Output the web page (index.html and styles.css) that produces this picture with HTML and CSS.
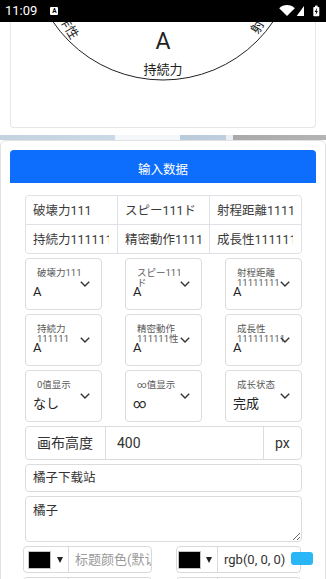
FILE: index.html
```html
<!DOCTYPE html>
<html lang="zh">
<head>
<meta charset="utf-8">
<title>替身面板</title>
<link rel="stylesheet" href="styles.css">
</head>
<body>
<div class="statusbar">
  <div class="sb-left">
    <span class="sb-time">11:09</span>
    <span class="sb-note">A</span>
  </div>
  <svg class="sb-icons" width="42" height="22" viewBox="0 0 42 22">
    <path d="M0.2 8.2 A11 11 0 0 1 15.8 8.2 L8 16 Z" fill="#fff"/>
    <polygon points="25,6 25,16 17.7,16" fill="#fff"/>
    <rect x="36" y="5.6" width="2.6" height="1.6" fill="#fff"/>
    <rect x="34.3" y="7" width="6" height="9.2" rx="0.8" fill="#fff"/>
    <path d="M37.9 8.2 L35.7 12 L37.1 12 L36.6 15 L38.9 11 L37.5 11 L38.2 8.2 Z" fill="#000"/>
  </svg>
</div>

<div class="chart-wrap">
  <div class="chart-card">
    <svg class="chart" width="304" height="105" viewBox="0 0 304 105">
      <circle cx="152" cy="-75" r="133" fill="none" stroke="#222" stroke-width="1"/>
      <text class="lbl" x="152" y="-197" text-anchor="middle" dominant-baseline="central">破壊力</text>
      <text class="lbl" x="257.7" y="-136" text-anchor="middle" dominant-baseline="central" transform="rotate(-120 257.7 -136)">スピード</text>
      <text class="lbl" x="256" y="-12" text-anchor="middle" dominant-baseline="central" transform="rotate(-60 256 -12)">射程距離</text>
      <text class="lbl" x="152" y="47" text-anchor="middle" dominant-baseline="central">持続力</text>
      <text class="lbl" x="48" y="-12" text-anchor="middle" dominant-baseline="central" transform="rotate(60 48 -12)">精密動作性</text>
      <text class="lbl" x="46.3" y="-136" text-anchor="middle" dominant-baseline="central" transform="rotate(120 46.3 -136)">成長性</text>
      <text class="val" x="152" y="19" text-anchor="middle" dominant-baseline="central">A</text>
    </svg>
  </div>
</div>

<div class="strip"></div>

<div class="panel">
  <button class="btn-primary" type="button">输入数据</button>

  <div class="form">
    <div class="name-table">
      <div class="cell"><span class="cell-text">破壊力111</span></div>
      <div class="cell"><span class="cell-text">スピー111ド</span></div>
      <div class="cell"><span class="cell-text">射程距離11111111</span></div>
      <div class="cell"><span class="cell-text">持続力111111</span></div>
      <div class="cell"><span class="cell-text">精密動作111111性</span></div>
      <div class="cell"><span class="cell-text">成長性111111111</span></div>
    </div>

    <div class="select-grid">
      <div class="fselect">
        <div class="fs-label">破壊力111</div>
        <div class="fs-value">A</div>
        <svg class="chev" width="10" height="6" viewBox="0 0 10 6"><polyline points="0.8,0.8 5,4.9 9.2,0.8" fill="none" stroke="#333" stroke-width="1.4"/></svg>
      </div>
      <div class="fselect">
        <div class="fs-label">スピー111ド</div>
        <div class="fs-value">A</div>
        <svg class="chev" width="10" height="6" viewBox="0 0 10 6"><polyline points="0.8,0.8 5,4.9 9.2,0.8" fill="none" stroke="#333" stroke-width="1.4"/></svg>
      </div>
      <div class="fselect">
        <div class="fs-label">射程距離11111111</div>
        <div class="fs-value">A</div>
        <svg class="chev" width="10" height="6" viewBox="0 0 10 6"><polyline points="0.8,0.8 5,4.9 9.2,0.8" fill="none" stroke="#333" stroke-width="1.4"/></svg>
      </div>
      <div class="fselect">
        <div class="fs-label">持続力111111</div>
        <div class="fs-value">A</div>
        <svg class="chev" width="10" height="6" viewBox="0 0 10 6"><polyline points="0.8,0.8 5,4.9 9.2,0.8" fill="none" stroke="#333" stroke-width="1.4"/></svg>
      </div>
      <div class="fselect">
        <div class="fs-label">精密動作111111性</div>
        <div class="fs-value">A</div>
        <svg class="chev" width="10" height="6" viewBox="0 0 10 6"><polyline points="0.8,0.8 5,4.9 9.2,0.8" fill="none" stroke="#333" stroke-width="1.4"/></svg>
      </div>
      <div class="fselect">
        <div class="fs-label">成長性111111111</div>
        <div class="fs-value">A</div>
        <svg class="chev" width="10" height="6" viewBox="0 0 10 6"><polyline points="0.8,0.8 5,4.9 9.2,0.8" fill="none" stroke="#333" stroke-width="1.4"/></svg>
      </div>
      <div class="fselect">
        <div class="fs-label">0值显示</div>
        <div class="fs-value">なし</div>
        <svg class="chev" width="10" height="6" viewBox="0 0 10 6"><polyline points="0.8,0.8 5,4.9 9.2,0.8" fill="none" stroke="#333" stroke-width="1.4"/></svg>
      </div>
      <div class="fselect">
        <div class="fs-label">∞值显示</div>
        <div class="fs-value">∞</div>
        <svg class="chev" width="10" height="6" viewBox="0 0 10 6"><polyline points="0.8,0.8 5,4.9 9.2,0.8" fill="none" stroke="#333" stroke-width="1.4"/></svg>
      </div>
      <div class="fselect">
        <div class="fs-label">成长状态</div>
        <div class="fs-value">完成</div>
        <svg class="chev" width="10" height="6" viewBox="0 0 10 6"><polyline points="0.8,0.8 5,4.9 9.2,0.8" fill="none" stroke="#333" stroke-width="1.4"/></svg>
      </div>
    </div>

    <div class="input-group">
      <div class="ig-addon ig-first">画布高度</div>
      <div class="ig-input">400</div>
      <div class="ig-addon ig-last">px</div>
    </div>

    <div class="text-input">橘子下载站</div>

    <textarea class="textarea" readonly>橘子</textarea>

    <div class="color-row">
      <div class="cgroup cgroup-a">
        <div class="c-btn"><span class="swatch"></span><span class="caret"></span></div>
        <div class="c-text c-placeholder">标题颜色(默认)</div>
      </div>
      <div class="cgroup cgroup-b">
        <div class="c-btn"><span class="swatch"></span><span class="caret"></span></div>
        <div class="c-text">rgb(0, 0, 0)</div>
        <span class="c-toggle"></span>
      </div>
    </div>

    <div class="color-row">
      <div class="cgroup cgroup-a">
        <div class="c-btn"><span class="swatch"></span><span class="caret"></span></div>
        <div class="c-text c-placeholder">背景颜色(默认)</div>
      </div>
      <div class="cgroup cgroup-b">
        <div class="c-btn"><span class="swatch"></span><span class="caret"></span></div>
        <div class="c-text">rgb(0, 0, 0)</div>
      </div>
    </div>
  </div>
</div>
</body>
</html>
```

FILE: styles.css
```css
* { box-sizing: border-box; }

html, body {
  margin: 0;
  padding: 0;
  overflow: hidden;
}

body {
  width: 326px;
  height: 579px;
  background: #fff;
  font-family: Roboto, "Noto Sans CJK SC", sans-serif;
  color: #333;
}

/* status bar */
.statusbar {
  height: 22px;
  background: #000;
  display: flex;
  align-items: center;
  justify-content: space-between;
  padding: 0 5px;
}
.sb-left { display: flex; align-items: center; }
.sb-time {
  color: #fff;
  font-size: 13px;
  line-height: 22px;
}
.sb-note {
  margin-left: 13px;
  width: 8px;
  height: 8px;
  background: #fff;
  border-radius: 1px;
  color: #000;
  font-size: 6.5px;
  font-weight: 700;
  line-height: 8px;
  text-align: center;
}
.sb-icons { display: block; }

/* chart card */
.chart-wrap { padding: 0 10px; }
.chart-card {
  border: 1px solid #e6e6e6;
  border-top: none;
  border-radius: 0 0 4px 4px;
  height: 106px;
}
.chart { display: block; }
.chart text {
  font-family: Roboto, "Noto Sans CJK SC", sans-serif;
  fill: #222;
}
.chart .lbl { font-size: 13px; }
.chart .val { font-size: 23px; }

.strip {
  margin-top: 7px;
  height: 5px;
  background: linear-gradient(to right,
    #c4d2e0 0, #cbd8e6 115px,
    #f5f8fb 115px, #f5f8fb 180px,
    #b9cadb 180px, #bfcfdf 226px,
    #e9eef3 226px, #e9eef3 233px,
    #a9a9a9 233px, #b4b4b4 100%);
}

/* main panel */
.panel {
  border: 1px solid #e2e2e2;
  border-radius: 6px;
  padding: 9px;
  background: #fff;
}

.btn-primary {
  display: flex;
  align-items: center;
  justify-content: center;
  width: 100%;
  height: 33px;
  padding: 4px 0 0;
  margin: 0;
  border: none;
  border-radius: 4px 4px 0 0;
  background: #0d6efd;
  color: #fff;
  font-family: inherit;
  font-size: 12.5px;
}

.form { margin: 12px 14px 0 15px; }

/* name table */
.name-table {
  display: grid;
  grid-template-columns: repeat(3, minmax(0, 1fr));
  gap: 1px;
  background: #dee2e6;
  border: 1px solid #dee2e6;
  border-radius: 4px;
  overflow: hidden;
}
.cell {
  min-width: 0;
  background: #fff;
  height: 28px;
  padding: 0 8px 0 7px;
  overflow: hidden;
}
.cell-text {
  display: block;
  overflow: hidden;
  white-space: nowrap;
  font-size: 12.5px;
  line-height: 29px;
  color: #3a3a3a;
}

/* floating selects */
.select-grid {
  margin-top: 4px;
  display: grid;
  grid-template-columns: repeat(3, 77px);
  justify-content: space-between;
  row-gap: 4px;
}
.fselect {
  position: relative;
  height: 52px;
  border: 1px solid #dcdcdc;
  border-radius: 4px;
  padding: 8.5px 0 0 7px;
}
.fs-label {
  margin-left: 4px;
  width: 48px;
  height: 10.5px;
  font-size: 9.5px;
  line-height: 10.5px;
  color: #5a5a5a;
}
.fs-value {
  margin-top: 5.5px;
  font-size: 13px;
  line-height: 16px;
  color: #222;
}
.chev {
  position: absolute;
  left: 54px;
  top: 22px;
  display: block;
}

/* input group */
.input-group {
  margin-top: 4px;
  height: 34px;
  display: flex;
  border: 1px solid #dcdcdc;
  border-radius: 4px;
  font-size: 14px;
  line-height: 32px;
  color: #333;
}
.ig-addon { padding-left: 11px; }
.ig-first { width: 80px; border-right: 1px solid #dcdcdc; }
.ig-input { flex: 1; padding-left: 11px; }
.ig-last { width: 38px; border-left: 1px solid #dcdcdc; }

.text-input {
  margin-top: 4px;
  height: 28px;
  border: 1px solid #dcdcdc;
  border-radius: 4px;
  padding: 0 7px;
  font-size: 12.5px;
  line-height: 26px;
  color: #333;
}

.textarea {
  display: block;
  margin: 4px 0 0;
  width: 100%;
  height: 46px;
  border: 1px solid #dcdcdc;
  border-radius: 4px;
  padding: 5px 7px;
  font-family: inherit;
  font-size: 12.5px;
  line-height: 18px;
  color: #333;
  resize: vertical;
  outline: none;
  background: #fff;
}

/* colour pickers */
.color-row {
  margin-top: 4px;
  display: flex;
  height: 27px;
}
.cgroup {
  position: relative;
  display: flex;
  height: 27px;
  border: 1px solid #d9d9d9;
  border-radius: 4px;
}
.cgroup-a { width: 129px; margin-left: -2px; }
.cgroup-b { width: 125px; margin-left: 24px; }
.c-btn {
  display: flex;
  align-items: center;
  flex: none;
  border-right: 1px solid #d9d9d9;
}
.cgroup-a .c-btn { width: 45px; padding-left: 4px; }
.cgroup-b .c-btn { width: 41px; padding-left: 1px; }
.swatch {
  width: 23px;
  height: 18px;
  background: #000;
  border: 1px solid #c4c4c4;
}
.caret {
  margin-left: 6px;
  width: 0;
  height: 0;
  border-left: 3.5px solid transparent;
  border-right: 3.5px solid transparent;
  border-top: 6px solid #222;
}
.cgroup-b .caret { margin-left: 5px; }
.c-text {
  flex: 1;
  min-width: 0;
  padding-left: 6px;
  overflow: hidden;
  white-space: nowrap;
  font-size: 13px;
  line-height: 25px;
  color: #333;
}
.c-placeholder { color: #9a9a9a; }
.c-toggle {
  position: absolute;
  left: 113.7px;
  top: 5px;
  width: 22px;
  height: 13.3px;
  border-radius: 3px;
  background: #29b6f6;
}
```
